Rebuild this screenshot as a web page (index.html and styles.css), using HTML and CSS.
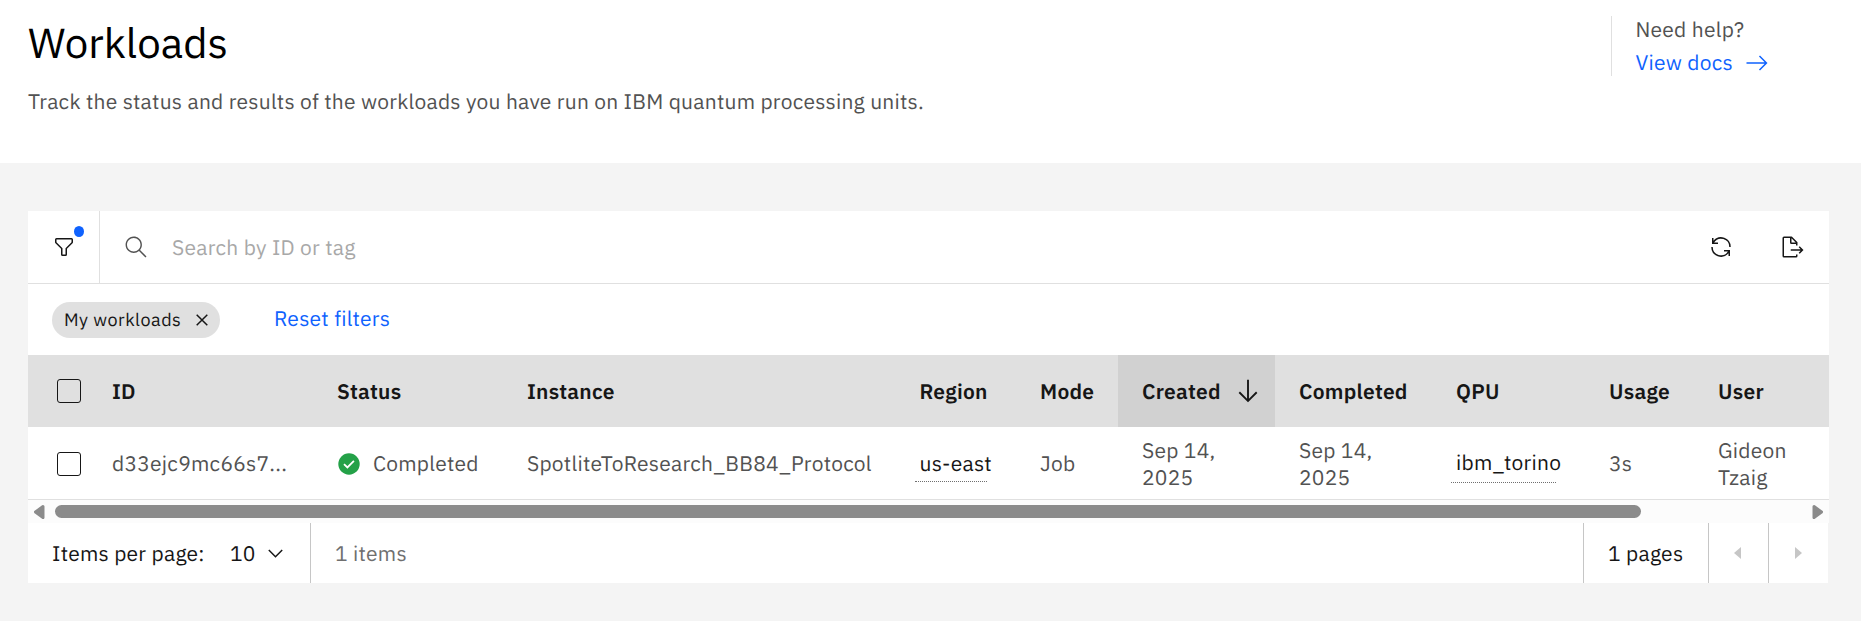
FILE: index.html
```html
<!DOCTYPE html>
<html lang="en">
<head>
<meta charset="utf-8">
<title>Workloads</title>
<link rel="stylesheet" href="styles.css">
</head>
<body>
<header class="page-header">
  <div class="intro">
    <h1 class="title">Workloads</h1>
    <p class="subtitle">Track the status and results of the workloads you have run on IBM quantum processing units.</p>
  </div>
  <aside class="help">
    <span>Need help?</span>
    <a class="link docs"><span class="docs-label">View docs</span><svg class="icon" viewBox="0 0 16 16"><path d="M9.3 3.7 13.1 7.5H1v1h12.1L9.3 12.3 10 13l5-5-5-5z"/></svg></a>
  </aside>
</header>
<main class="card">
  <div class="toolbar">
    <button class="filter-btn"><svg class="icon" viewBox="0 0 32 32"><path d="M18 28H14a2 2 0 0 1-2-2V18.41L4.59 11A2 2 0 0 1 4 9.59V6A2 2 0 0 1 6 4H26a2 2 0 0 1 2 2V9.59A2 2 0 0 1 27.41 11L20 18.41V26A2 2 0 0 1 18 28ZM6 6V9.59l8 8V26h4V17.59l8-8V6Z"/></svg><span class="dot"></span></button>
    <div class="search"><svg class="icon" viewBox="0 0 16 16"><path d="M15 14.3 10.7 10c1.9-2.3 1.6-5.8-.7-7.7S4.2.7 2.3 3 .7 8.8 3 10.7c2 1.7 5 1.7 7 0l4.3 4.3.7-.7ZM2 6.5C2 4 4 2 6.5 2S11 4 11 6.5 9 11 6.5 11 2 9 2 6.5Z"/></svg><span class="placeholder">Search by ID or tag</span></div>
    <div class="actions">
      <svg class="icon" viewBox="0 0 32 32"><path d="M12 10H6.78A11 11 0 0 1 27 16h2A13 13 0 0 0 6 7.68V4H4v8h8ZM20 22h5.22A11 11 0 0 1 5 16H3a13 13 0 0 0 23 8.32V28h2V20H20Z"/></svg>
      <svg class="icon" viewBox="0 0 32 32"><path d="M13 21h13.17l-2.58 2.59L25 25l5-5-5-5-1.41 1.41L26.17 19H13z"/><path d="M22 14v-4a1 1 0 0 0-.29-.71l-7-7A1 1 0 0 0 14 2H4A2 2 0 0 0 2 4V28a2 2 0 0 0 2 2H20a2 2 0 0 0 2-2V26H20v2H4V4h8v6a2 2 0 0 0 2 2h6v2Zm-8-4V4.41L19.59 10Z"/></svg>
    </div>
  </div>
  <div class="filters">
    <span class="tag"><span>My workloads</span><svg class="close" viewBox="0 0 12 12"><path d="M.7.7l10.6 10.6M11.3.7L.7 11.3"/></svg></span>
    <a class="link reset">Reset filters</a>
  </div>
  <div class="row head">
    <div class="check-cell"><span class="checkbox"></span></div>
    <div class="cell">ID</div>
    <div class="cell">Status</div>
    <div class="cell">Instance</div>
    <div class="cell">Region</div>
    <div class="cell">Mode</div>
    <div class="cell sorted">Created<svg class="sort" viewBox="0 0 32 32"><path d="M24.59 16.59 17 24.17V4H15V24.17L7.41 16.59 6 18 16 28 26 18z"/></svg></div>
    <div class="cell">Completed</div>
    <div class="cell">QPU</div>
    <div class="cell">Usage</div>
    <div class="cell">User</div>
  </div>
  <div class="row body">
    <div class="check-cell"><span class="checkbox"></span></div>
    <div class="cell">d33ejc9mc66s7...</div>
    <div class="cell"><svg class="ok" viewBox="0 0 22 22"><circle cx="11" cy="11" r="10.7" fill="#24a148"/><path d="M6 11.2l3.4 3.3 6.5-6.6" fill="none" stroke="#fff" stroke-width="1.8"/></svg>Completed</div>
    <div class="cell">SpotliteToResearch_BB84_Protocol</div>
    <div class="cell"><span class="hint region">us-east</span></div>
    <div class="cell">Job</div>
    <div class="cell two-line">Sep 14,<br>2025</div>
    <div class="cell two-line">Sep 14,<br>2025</div>
    <div class="cell"><span class="hint qpu">ibm_torino</span></div>
    <div class="cell">3s</div>
    <div class="cell two-line">Gideon<br>Tzaig</div>
  </div>
  <div class="scrollbar">
    <svg class="scroll-arrow" viewBox="0 0 11 14"><path d="M9 1.5 1.5 7 9 12.5z"/></svg>
    <span class="thumb"></span>
    <svg class="scroll-arrow" viewBox="0 0 11 14"><path d="M2 1.5 9.5 7 2 12.5z"/></svg>
  </div>
  <footer class="pagination">
    <div class="page-size"><span class="size-label">Items per page:</span><span class="size-value">10</span><svg class="chevron" viewBox="0 0 15 9"><path d="M.8 1l6.7 6.7L14.2 1"/></svg></div>
    <div class="count">1 items</div>
    <div class="pages">1 pages</div>
    <div class="nav prev"><svg class="caret" viewBox="0 0 7 12"><path d="M7 0v12L0 6z"/></svg></div>
    <div class="nav next"><svg class="caret" viewBox="0 0 7 12"><path d="M0 0v12l7-6z"/></svg></div>
  </footer>
</main>
</body>
</html>
```

FILE: styles.css
```css
* { box-sizing: border-box; }
body {
  margin: 0;
  height: 621px;
  overflow: hidden;
  background: #f4f4f4;
  color: #161616;
  font: 21px/27px "IBM Plex Sans", Roboto, sans-serif;
  letter-spacing: 0.24px;
  text-rendering: geometricPrecision;
  white-space: nowrap;
}
svg { display: block; flex: none; }
.icon { width: 24px; height: 24px; fill: currentColor; }
.link { color: #0f62fe; }

.page-header {
  display: flex;
  justify-content: space-between;
  height: 163px;
  padding-left: 28px;
  background: #fff;
}
.title { margin: 16px 0 0; font-size: 42px; line-height: 54px; font-weight: 400; letter-spacing: 0; color: #000; }
.subtitle { margin: 18px 0 0; color: #525252; }
.help {
  display: flex;
  flex-direction: column;
  gap: 6px;
  width: 250px;
  height: 60px;
  margin-top: 16px;
  border-left: 1px solid #e0e0e0;
  padding-left: 23.5px;
  color: #525252;
}
.docs { display: flex; align-items: center; }
.docs .icon { margin-left: 12.5px; }
.docs-label { width: 97px; }

.card { width: 1801px; margin: 48px 0 0 28px; }
.toolbar {
  display: flex;
  height: 73px;
  background: #fff;
  border-bottom: 1px solid #e0e0e0;
}
.filter-btn {
  position: relative;
  width: 72px;
  padding: 0 0 0 24px;
  border: 0;
  border-right: 1px solid #e0e0e0;
  background: none;
  color: #161616;
}
.dot {
  position: absolute;
  left: 46px;
  top: 15px;
  width: 10px;
  height: 11px;
  border-radius: 50%;
  background: #0f62fe;
}
.search { display: flex; align-items: center; flex: 1; gap: 24px; padding-left: 24px; color: #525252; }
.placeholder { color: #a8a8a8; }
.actions { display: flex; align-items: center; gap: 48px; padding-right: 24px; }

.filters { display: flex; align-items: center; height: 71px; padding-left: 24px; background: #fff; }
.tag {
  display: flex;
  align-items: center;
  justify-content: space-between;
  width: 168px;
  height: 36px;
  margin-top: 1px;
  padding: 0 12px;
  border-radius: 18px;
  background: #e0e0e0;
  font-size: 18px;
  line-height: 26px;
  letter-spacing: 0.48px;
}
.close { width: 12px; height: 12px; stroke: #161616; stroke-width: 1.5; fill: none; }
.reset { margin: 0 0 2px 54px; }

.row {
  display: grid;
  grid-template-columns: 60px 225px 190px 392.5px 120.5px 102px 157px 157px 153px 109px 135px;
  height: 72px;
}
.head { background: #e0e0e0; font-weight: 600; line-height: 28px; }
.body { height: 73px; background: #fff; border-bottom: 1px solid #e0e0e0; color: #525252; }
.cell { display: flex; align-items: center; padding-left: 24px; }
.two-line { display: block; padding-top: 10px; }
.check-cell { display: flex; align-items: center; padding-left: 29px; }
.checkbox { width: 24px; height: 24px; border: 1px solid #161616; border-radius: 3px; }
.body .checkbox { margin-top: 2px; }
.sorted { background: #d1d1d1; }
.sort { width: 30px; height: 30px; margin-left: auto; margin-right: 12px; fill: #161616; }
.ok { width: 22px; height: 22px; margin: 1px 13px 0 1px; }
.hint { margin-left: -5px; padding: 5px 0 0 5px; color: #161616; border-bottom: 1px dotted #6f6f6f; }
.region { width: 72px; height: 37px; }
.qpu { width: 105px; height: 39px; }

.scrollbar { display: flex; align-items: center; height: 23px; padding: 0 6px; background: #fcfcfc; }
.scroll-arrow { width: 11px; height: 14px; fill: #8b8b8b; stroke: #8b8b8b; stroke-width: 3; stroke-linejoin: round; }
.thumb { width: 1586px; height: 13px; margin: 0 auto 0 10px; border-radius: 7px; background: #8b8b8b; }

.pagination { display: flex; width: 1800px; height: 60px; background: #fff; line-height: 60px; }
.page-size { display: flex; align-items: center; width: 283px; padding-left: 24px; border-right: 1px solid #c6c6c6; }
.size-label { width: 178px; }
.size-value { width: 38px; }
.chevron { width: 15px; height: 9px; fill: none; stroke: #161616; stroke-width: 1.5; }
.count { flex: 1; padding-left: 24px; color: #6f6f6f; }
.pages { width: 126px; padding-left: 24px; border-left: 1px solid #c6c6c6; border-right: 1px solid #c6c6c6; }
.nav { display: flex; align-items: center; width: 60px; }
.prev { padding-left: 25px; border-right: 1px solid #c6c6c6; }
.next { width: 59px; padding-left: 26px; }
.caret { width: 7px; height: 12px; fill: #c6c6c6; }
```
